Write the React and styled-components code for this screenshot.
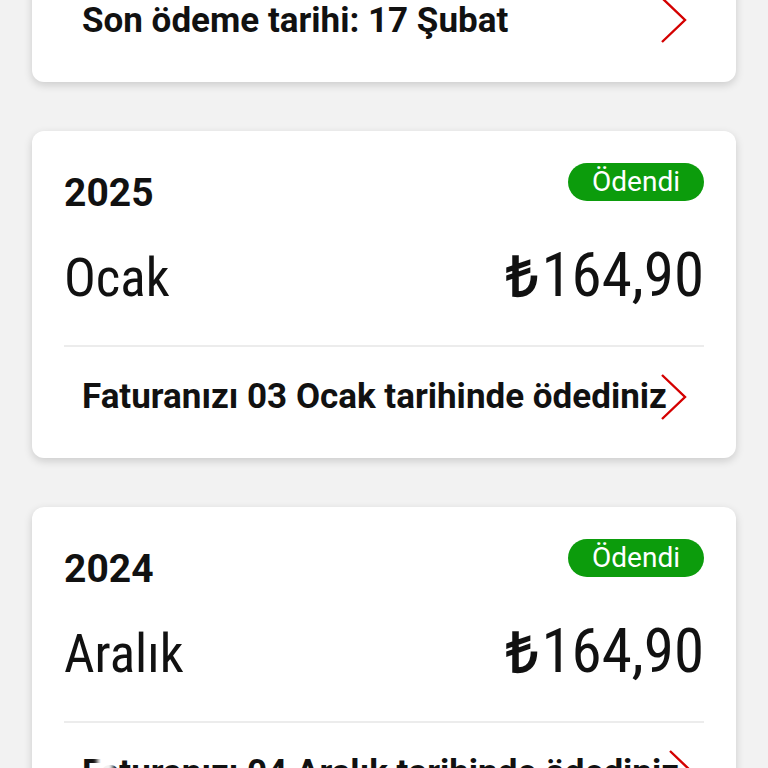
import React from "react";
import styled, { createGlobalStyle } from "styled-components";

const Global = createGlobalStyle`
  html, body { margin: 0; padding: 0; background: #f2f2f2; overflow: hidden; }
  body { font-family: Roboto, "Noto Sans", sans-serif; color: #111; }
`;

const Page = styled.div`
  display: flex;
  flex-direction: column;
  gap: 49px;
  padding: 0 32px;
  margin-top: -42px;
  height: 810px;
  overflow: hidden;
  position: relative;
`;

const Card = styled.div`
  background: #fff;
  border-radius: 12px;
  box-shadow: 0 3px 8px rgba(0, 0, 0, 0.16);
  padding: 0 32px;
  flex-shrink: 0;
`;

const HeaderRow = styled.div`
  display: flex;
  justify-content: space-between;
  align-items: flex-start;
  padding-top: 32px;
`;

const Year = styled.div`
  font-family: Roboto, sans-serif;
  font-weight: 700;
  font-size: 39px;
  font-stretch: 100%;
  line-height: 1;
  margin-top: 11px;
`;

const Badge = styled.div`
  background: #0c9c0c;
  color: #fff;
  border-radius: 19px;
  height: 38px;
  padding: 0 24px;
  display: flex;
  align-items: center;
  font-family: Roboto, sans-serif;
  font-stretch: 92%;
  font-size: 28px;
  line-height: 1;
`;

const AmountRow = styled.div`
  display: flex;
  justify-content: space-between;
  align-items: baseline;
  padding: 26px 0 33px;
`;

const Month = styled.div`
  font-family: Roboto, sans-serif;
  font-weight: 400;
  font-stretch: 80%;
  font-size: 53px;
  line-height: 1.2;
`;

const Amount = styled.div`
  font-family: Roboto, sans-serif;
  font-weight: 400;
  font-stretch: 78%;
  font-size: 61px;
  line-height: 1.2;
`;

const Lira = styled.span`
  font-family: "Open Sans", sans-serif;
  font-weight: 800;
  font-stretch: 100%;
  font-size: 56px;
  margin-right: 3px;
`;

const Divider = styled.div`
  height: 2px;
  background: #ececec;
`;

const Footer = styled.div`
  display: flex;
  align-items: center;
  justify-content: space-between;
  height: ${(p) => p.$h}px;
  padding: 0 17px ${(p) => p.$pb}px 18px;
  box-sizing: border-box;
`;

const FooterText = styled.span`
  font-family: Roboto, sans-serif;
  font-weight: 700;
  font-size: 35px;
  font-stretch: 90.5%;
  white-space: nowrap;
`;

const Chevron = styled.svg`
  flex-shrink: 0;
  width: 28px;
  height: 46px;
  margin-left: -12px;
`;

const Arrow = () => (
  <Chevron viewBox="0 0 28 46">
    <path d="M3 1 L26 23 L3 45" fill="none" stroke="#d40000" strokeWidth="2.4" />
  </Chevron>
);

const Fade = styled.div`
  position: absolute;
  left: 97px;
  top: 792px;
  width: 16px;
  height: 36px;
  background: rgba(255, 255, 255, 0.95);
  filter: blur(2px);
`;

const bills = [
  { year: "2025", month: "Ocak", amount: "164,90", paid: "Faturanızı 03 Ocak tarihinde ödediniz" },
  { year: "2024", month: "Aralık", amount: "164,90", paid: "Faturanızı 04 Aralık tarihinde ödediniz" },
];

export default function App() {
  return (
    <>
      <Global />
      <Page>
        <Card>
          <Footer $h={124} $pb={0}>
            <FooterText>Son ödeme tarihi: 17 Şubat</FooterText>
            <Arrow />
          </Footer>
        </Card>
        {bills.map((b) => (
          <Card key={b.year}>
            <HeaderRow>
              <Year>{b.year}</Year>
              <Badge>Ödendi</Badge>
            </HeaderRow>
            <AmountRow>
              <Month>{b.month}</Month>
              <Amount>
                <Lira>₺</Lira>
                {b.amount}
              </Amount>
            </AmountRow>
            <Divider />
            <Footer $h={111} $pb={12}>
              <FooterText>{b.paid}</FooterText>
              <Arrow />
            </Footer>
          </Card>
        ))}
        <Fade />
      </Page>
    </>
  );
}
